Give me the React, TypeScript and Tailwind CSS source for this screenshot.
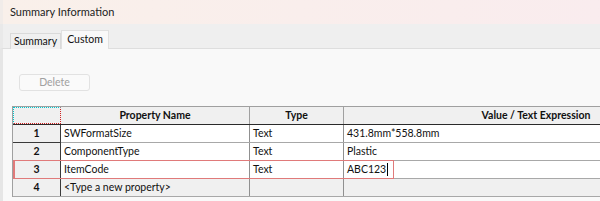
import React from "react";

const rows = [
  { n: "1", name: "SWFormatSize", type: "Text", value: "431.8mm*558.8mm" },
  { n: "2", name: "ComponentType", type: "Text", value: "Plastic" },
  { n: "3", name: "ItemCode", type: "Text", value: "ABC123" },
];

export default function App() {
  return (
    <div
      className="w-[600px] h-[201px] overflow-hidden flex flex-col bg-[#f9f9f9] text-[#111]"
      style={{ fontFamily: 'Lato, "Noto Sans", sans-serif' }}
    >
      {/* title bar */}
      <div className="h-[24px] shrink-0 flex items-center pl-[7px] bg-gradient-to-r from-[#f9f0ea] to-[#f9ecee] text-[11px] text-[#222] border-l-[3px] border-[#f1ece9]">
        Summary Information
      </div>

      {/* tab strip */}
      <div className="h-[25px] shrink-0 flex items-end pl-[7px] bg-[#efefef] border-b border-[#dedede] border-l-[3px] border-l-[#e9e9e9]">
        <div className="w-[51px] h-[16px] flex items-center justify-center text-[10.5px] bg-[#f0f0f0] border border-b-0 border-[#dadada] -mb-px">
          Summary
        </div>
        <div className="w-[48px] h-[19px] flex items-center justify-center text-[10.5px] bg-[#f9f9f9] border border-b-0 border-[#e0e0e0] -mb-px relative z-10">
          Custom
        </div>
      </div>

      {/* content */}
      <div className="flex-1 flex flex-col pl-[9px] pt-[25px] border-l-[3px] border-l-[#e6e6e6]">
        <div className="ml-[7px] w-[71px] h-[17px] flex items-center justify-center rounded-[3px] border border-[#e2e2e2] bg-[#fafafa] text-[10.5px] text-[#a0a0a0]">
          Delete
        </div>

        <div className="relative mt-[15px] w-[800px] border-l border-t border-[#a0a0a0] text-[10.5px]">
          {/* header */}
          <div className="flex h-[18px] bg-[#f0f0f0] border-b border-[#2a2a2a]">
            <div className="w-[48px] shrink-0 border border-dotted border-[#00c8d0] border-r-[#d02020] border-b-[#d02020]" />
            <div className="w-[189px] shrink-0 flex items-center justify-center font-bold border-r border-[#a0a0a0]">
              Property Name
            </div>
            <div className="w-[94px] shrink-0 flex items-center justify-center font-bold border-r border-[#a0a0a0]">
              Type
            </div>
            <div className="w-[384px] shrink-0 flex items-center justify-center font-bold">
              Value / Text Expression
            </div>
          </div>

          {rows.map((r) => (
            <div key={r.n} className="flex h-[18px] bg-white border-b border-[#a8a8a8]">
              <div className="w-[48px] shrink-0 flex items-center justify-center font-bold bg-[#f0f0f0] border-r border-[#3a3a3a] -mb-px border-b">
                {r.n}
              </div>
              <div className="w-[189px] shrink-0 flex items-center pl-[3px] border-r border-[#909090]">
                {r.name}
              </div>
              <div className="w-[94px] shrink-0 flex items-center pl-[3px] border-r border-[#909090]">
                {r.type}
              </div>
              <div className="w-[384px] shrink-0 flex items-center pl-[3px]">
                {r.value}
                {r.n === "3" && <span className="w-px h-[13px] bg-black ml-px" />}
              </div>
            </div>
          ))}

          <div className="flex h-[18px] bg-[#f0f0f0] border-b border-[#a8a8a8]">
            <div className="w-[48px] shrink-0 flex items-center justify-center font-bold border-r border-[#3a3a3a]">
              4
            </div>
            <div className="w-[189px] shrink-0 flex items-center pl-[3px] border-r border-[#909090]">
              &lt;Type a new property&gt;
            </div>
            <div className="w-[94px] shrink-0 border-r border-[#909090]" />
            <div className="w-[384px] shrink-0" />
          </div>

          {/* current row highlight */}
          <div className="absolute left-0 top-[53px] w-[381px] h-[19px] border border-[#e07a7a] border-l-2 pointer-events-none" />
        </div>
      </div>
    </div>
  );
}
